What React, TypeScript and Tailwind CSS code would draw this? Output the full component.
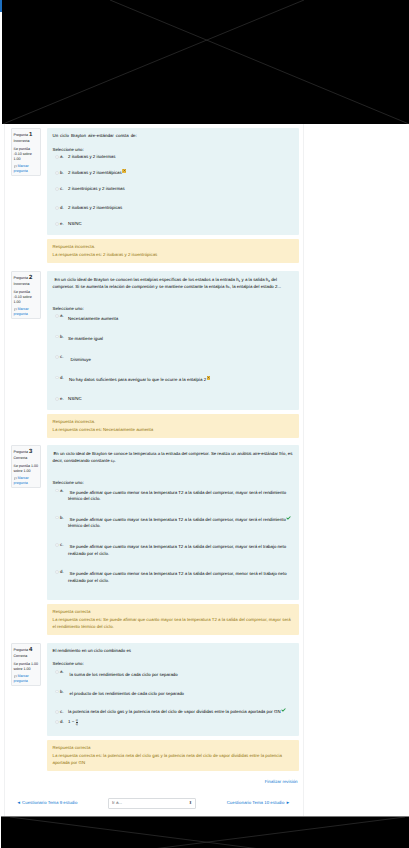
import { Check, Flag, X } from 'lucide-react';
import type { ReactNode } from 'react';

type Option = {
  label: string;
  text: ReactNode;
  h: string;
  shift?: string;
  mark?: 'wrong' | 'right';
  floatMark?: boolean;
};

function Radio() {
  return <span className="mt-[1px] h-[3.5px] w-[3.5px] shrink-0 rounded-full border-[0.5px] border-[#dde3e6] bg-[#f2f6f7]" />;
}

function Mark({ type }: { type: 'wrong' | 'right' }) {
  if (type === 'wrong') {
    return (
      <span className="ml-[0.5px] inline-flex h-[3.5px] w-[3.5px] -translate-y-[1px] items-center justify-center bg-[#e8b93c] align-top">
        <X size={3} strokeWidth={4} className="text-[#6b4a10]" />
      </span>
    );
  }
  return <Check size={5} strokeWidth={5} className="inline -translate-y-[1.5px] align-top text-[#2e9e4f]" />;
}

function Sidebar({ num, state, grade, h }: { num: string; state: string; grade: string[]; h: string }) {
  return (
    <div className={`w-[30px] shrink-0 self-start whitespace-nowrap rounded-[1px] border-[0.5px] border-[#e4e7ea] bg-[#f8f9fa] px-[2px] pt-[3px] text-[3.6px] leading-[5px] text-[#212529] ${h}`}>
      <div className="flex items-center gap-[1px] leading-[6px]">
        Pregunta <b className="text-[6px] font-bold">{num}</b>
      </div>
      <div className="mt-[1px]">{state}</div>
      <div className="mt-[2.5px]">
        {grade.map((g) => (
          <div key={g}>{g}</div>
        ))}
      </div>
      <div className="mt-[2.5px] text-[#1177d1]">
        <Flag size={3} className="mr-[1px] inline text-[#555]" />
        Marcar
        <br />
        pregunta
      </div>
    </div>
  );
}

function Options({ items }: { items: Option[] }) {
  return (
    <div>
      {items.map((o) => (
        <div key={o.label} className={`relative flex items-start pl-[2.5px] ${o.h}`}>
          <Radio />
          <span className="ml-[1.5px] w-[8px] shrink-0">{o.label}</span>
          <div className={`min-w-0 flex-1 ${o.shift ?? ''}`}>
            {o.text}
            {o.mark && !o.floatMark && <Mark type={o.mark} />}
          </div>
          {o.mark && o.floatMark && (
            <span className="absolute left-[233px] top-[2px] leading-none">
              <Mark type={o.mark} />
            </span>
          )}
        </div>
      ))}
    </div>
  );
}

function Question(props: {
  num: string;
  state: string;
  grade: string[];
  sideH: string;
  boxH: string;
  intro: ReactNode;
  selectGap: string;
  optionsGap: string;
  options: Option[];
  feedback: string;
  answer: ReactNode;
  fbH: string;
  mb: string;
}) {
  return (
    <div className={`flex gap-[6px] ${props.mb}`}>
      <Sidebar num={props.num} state={props.state} grade={props.grade} h={props.sideH} />
      <div className="w-[252px] shrink-0">
        <div className={`rounded-[1px] bg-[#e7f3f5] px-[6px] pt-[5px] text-black ${props.boxH}`}>
          {props.intro}
          <div className={props.selectGap}>Seleccione uno:</div>
          <div className={props.optionsGap}>
            <Options items={props.options} />
          </div>
        </div>
        <div className={`mt-[4px] rounded-[1px] bg-[#fcefcc] px-[6px] pt-[4.5px] text-[#8f7008] ${props.fbH}`}>
          <div>{props.feedback}</div>
          <div className="mt-[2px]">{props.answer}</div>
        </div>
      </div>
    </div>
  );
}

function Fraction() {
  return (
    <span className="inline-flex items-start gap-[1.5px]">
      1 −
      <span className="inline-flex flex-col items-center text-[2.6px] leading-[3px]">
        <span className="border-b-[0.5px] border-[#444]">Q</span>
        <span>Q</span>
      </span>
    </span>
  );
}

const q1: Option[] = [
  { label: 'a.', text: '2 isobaras y 2 isotermas', h: 'h-[16px]' },
  { label: 'b.', text: '2 isobaras y 2 isoentálpicas', h: 'h-[16px]', mark: 'wrong' },
  { label: 'c.', text: '2 isoentrópicas y 2 isotermas', h: 'h-[19px]' },
  { label: 'd.', text: '2 isobaras y 2 isoentrópicas', h: 'h-[16px]' },
  { label: 'e.', text: 'NS/NC', h: 'h-[10px]' },
];

const q2: Option[] = [
  { label: 'a.', text: 'Necesariamente aumenta', h: 'h-[20.5px]', shift: 'pt-[2.5px]' },
  { label: 'b.', text: 'Se mantiene igual', h: 'h-[20.5px]', shift: 'pt-[2.5px]' },
  { label: 'c.', text: 'Disminuye', h: 'h-[20.5px]', shift: 'pt-[2.5px] pl-[2.5px]' },
  { label: 'd.', text: 'No hay datos suficientes para averiguar lo que le ocurre a la entalpía 2', h: 'h-[21.5px]', shift: 'pt-[2.5px] pl-[1px]', mark: 'wrong' },
  { label: 'e.', text: 'NS/NC', h: 'h-[10px]' },
];

const q3: Option[] = [
  { label: 'a.', text: 'Se puede afirmar que cuanto menor sea la temperatura T2 a la salida del compresor, mayor será el rendimiento térmico del ciclo.', h: 'h-[27.3px]', shift: 'pt-[2px] indent-[1.5px]' },
  { label: 'b.', text: 'Se puede afirmar que cuanto mayor sea la temperatura T2 a la salida del compresor, mayor será el rendimiento térmico del ciclo.', h: 'h-[27.3px]', shift: 'pt-[2px] indent-[1.5px]', mark: 'right', floatMark: true },
  { label: 'c.', text: 'Se puede afirmar que cuanto mayor sea la temperatura T2 a la salida del compresor, mayor será el trabajo neto realizado por el ciclo.', h: 'h-[27.3px]', shift: 'pt-[2px] indent-[1.5px]' },
  { label: 'd.', text: 'Se puede afirmar que cuanto menor sea la temperatura T2 a la salida del compresor, menor será el trabajo neto realizado por el ciclo.', h: 'h-[20px]', shift: 'pt-[2px] indent-[1.5px]' },
];

const q4: Option[] = [
  { label: 'a.', text: 'la suma de los rendimientos de cada ciclo por separado', h: 'h-[19.5px]', shift: 'pt-[3px] pl-[1.5px]' },
  { label: 'b.', text: 'el producto de los rendimientos de cada ciclo por separado', h: 'h-[20.5px]', shift: 'pt-[2px] pl-[1.5px]' },
  { label: 'c.', text: 'la potencia neta del ciclo gas y la potencia neta del ciclo de vapor divididas  entre la potencia aportada por GN', h: 'h-[10px]', mark: 'right' },
  { label: 'd.', text: <Fraction />, h: 'h-[10px]' },
];

export default function App() {
  return (
    <div className="h-[848px] w-[409px] overflow-hidden bg-white font-['Liberation_Sans',Arial,sans-serif] text-[4.38px] leading-[6.6px] [text-rendering:geometricPrecision]">
      <div className="relative ml-[2px] h-[124px] bg-black">
        <div className="absolute -left-[2px] top-0 h-[12px] w-[2px] bg-[#1d6fc0]" />
        <svg className="absolute inset-0" width="407" height="124" viewBox="2 0 407 124">
          <line x1="3" y1="124" x2="304" y2="0" stroke="#3a3a3a" strokeWidth="0.6" />
          <line x1="409" y1="124" x2="110" y2="0" stroke="#3a3a3a" strokeWidth="0.6" />
        </svg>
      </div>

      <div className="ml-[4px] h-[692px] w-[300px] border-x-[0.5px] border-[#f0f1f2] px-[5.5px] pt-[4px]">
        <Question
          num="1"
          state="Incorrecta"
          grade={['Se puntúa', '-0.10 sobre', '1.00']}
          sideH="h-[48px]"
          boxH="h-[107px]"
          intro={<div className="[word-spacing:0.8px]">Un ciclo Brayton aire-estándar consta de:</div>}
          selectGap="mt-[7px]"
          optionsGap="mt-[1px]"
          options={q1}
          feedback="Respuesta incorrecta."
          answer="La respuesta correcta es: 2 isobaras y 2 isoentrópicas"
          fbH="h-[24px]"
          mb="mb-[8px]"
        />
        <Question
          num="2"
          state="Incorrecta"
          grade={['Se puntúa', '-0.10 sobre', '1.00']}
          sideH="h-[48px]"
          boxH="h-[139px]"
          intro={
            <div className="mt-[1px] h-[25px] indent-[2px]">
              En un ciclo ideal de Brayton se conocen las entalpías específicas de los estados a la entrada h<sub className="text-[3px]">1</sub> y a la salida h<sub className="text-[3px]">2</sub> del compresor. Si se aumenta la relación de compresión y se mantiene constante la entalpía h<sub className="text-[3px]">1</sub>, la entalpía del estado 2...
            </div>
          }
          selectGap="mt-[3.5px]"
          optionsGap="mt-[1px]"
          options={q2}
          feedback="Respuesta incorrecta."
          answer="La respuesta correcta es: Necesariamente aumenta"
          fbH="h-[24px]"
          mb="mb-[7px]"
        />
        <Question
          num="3"
          state="Correcta"
          grade={['Se puntúa 1.00', 'sobre 1.00']}
          sideH="h-[43px]"
          boxH="h-[155px]"
          intro={
            <div className="mt-[1px] h-[25px] indent-[1px] text-[4.3px]">
              En un ciclo ideal de Brayton se conoce la temperatura a la entrada del compresor. Se realiza un análisis aire-estándar frío, es decir, considerando constante c<sub className="text-[3px]">p</sub>.
            </div>
          }
          selectGap="mt-[4px]"
          optionsGap="mt-[1px]"
          options={q3}
          feedback="Respuesta correcta"
          answer="La respuesta correcta es:  Se puede afirmar que cuanto mayor sea la temperatura T2 a la salida del compresor, mayor será el rendimiento térmico del ciclo."
          fbH="h-[31px]"
          mb="mb-[8px]"
        />
        <Question
          num="4"
          state="Correcta"
          grade={['Se puntúa 1.00', 'sobre 1.00']}
          sideH="h-[43px]"
          boxH="h-[93px]"
          intro={<div>El rendimiento en un ciclo combinado es</div>}
          selectGap="mt-[6px]"
          optionsGap="mt-[2px]"
          options={q4}
          feedback="Respuesta correcta"
          answer="La respuesta correcta es: la potencia neta del ciclo gas y la potencia neta del ciclo de vapor divididas  entre la potencia aportada por GN"
          fbH="h-[31px]"
          mb="mb-[8px]"
        />

        <div className="mt-[2px] text-right text-[#1177d1]">Finalizar revisión</div>

        <div className="mt-[12px] flex items-center justify-between pl-[6px] pr-[7.5px] text-[#1177d1]">
          <span>◄ Cuestionario Tema 9 estudio</span>
          <div className="flex h-[11px] w-[88px] items-center justify-between rounded-[1px] border-[0.5px] border-[#d9dcdf] px-[3px] text-[#495057]">
            <span>Ir a...</span>
            <span className="text-[4px]">⬍</span>
          </div>
          <span>Cuestionario Tema 10 estudio ►</span>
        </div>
      </div>

      <div className="relative ml-[1px] h-[32px] border-t border-[#777] bg-black">
        <svg className="absolute inset-0" width="408" height="32" viewBox="1 0 408 32">
          <line x1="10" y1="0" x2="260" y2="32" stroke="#3a3a3a" strokeWidth="0.6" />
          <line x1="405" y1="0" x2="153" y2="32" stroke="#3a3a3a" strokeWidth="0.6" />
        </svg>
      </div>
    </div>
  );
}
